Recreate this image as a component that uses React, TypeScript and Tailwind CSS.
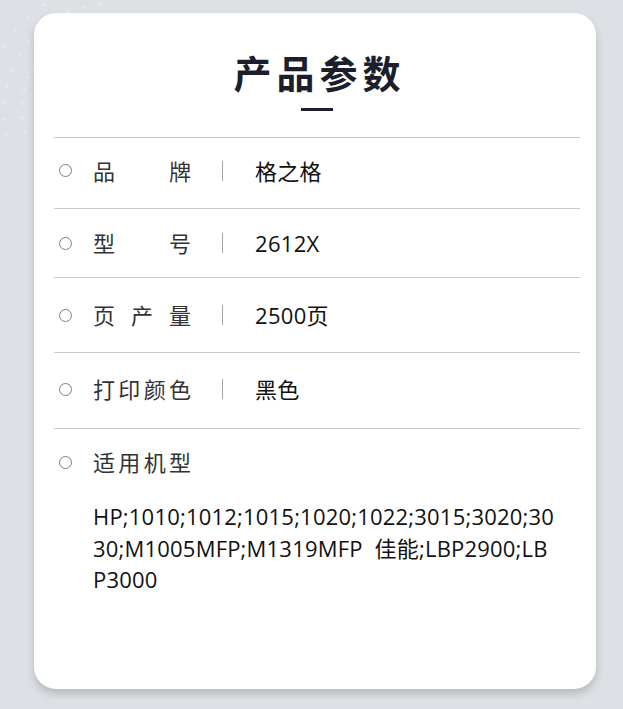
import React from 'react';

const rows = [
  { label: '品牌', value: '格之格', h: 'h-[71px] pb-[5px]' },
  { label: '型号', value: '2612X', h: 'h-[69px]' },
  { label: '页产量', value: '2500页', h: 'h-[75px]' },
  { label: '打印颜色', value: '黑色', h: 'h-[76px] pb-[3px]' },
];

function Dots() {
  // faint dotted arcs in the page corner
  const dots: { x: number; y: number }[] = [];
  [70, 88, 106, 124].forEach((r) => {
    for (let a = 95; a <= 200; a += 9) {
      const t = (a * Math.PI) / 180;
      dots.push({ x: 110 + r * Math.cos(t), y: 110 - r * Math.sin(t) });
    }
  });
  return (
    <svg className="absolute left-0 top-0" width="140" height="260" viewBox="0 0 140 260">
      {dots.map((d, i) => (
        <circle key={i} cx={d.x} cy={d.y} r="1.6" fill="#ffffff" opacity="0.3" />
      ))}
    </svg>
  );
}

function Bullet() {
  return <span className="block h-[13px] w-[13px] shrink-0 rounded-full border-[1.5px] border-[#7d7d7d]" />;
}

export default function App() {
  return (
    <div
      className="relative h-[709px] w-full overflow-hidden bg-[#dde1e5] pl-[34px] pt-[13px]"
      style={{ fontFamily: '"Open Sans", "Noto Sans CJK SC", sans-serif' }}
    >
      <Dots />
      <div className="relative flex h-[676px] w-[562px] flex-col rounded-[22px] bg-white pl-[20px] pr-[16px] pt-[37px] shadow-[0_5px_8px_rgba(0,0,0,0.18)]">
        <h1 className="pl-[5px] text-center text-[38px] font-semibold leading-[46px] tracking-[5px] text-[#1c1e2e]">
          产品参数
        </h1>
        <div className="mx-auto mt-[12px] h-[3px] w-[32px] bg-[#1c1e2e]" />

        <div className="mt-[26px] border-t border-[#c9c9c9]">
          {rows.map((r) => (
            <div key={r.label} className={`flex items-center border-b border-[#c9c9c9] pl-[5px] ${r.h}`}>
              <Bullet />
              <span className="ml-[21px] w-[98px] text-[22px] leading-[32px] text-[#333] [text-align-last:justify]">
                {r.label}
              </span>
              <span className="ml-[31px] h-[20px] w-px bg-[#a8a8a8]" />
              <span className="ml-[32px] text-[22px] leading-[32px] tracking-[0.3px] text-[#111]">{r.value}</span>
            </div>
          ))}

          <div className="flex h-[66px] items-center pl-[5px]">
            <Bullet />
            <span className="ml-[21px] w-[98px] text-[22px] leading-[32px] text-[#333] [text-align-last:justify]">
              适用机型
            </span>
          </div>
          <p className="ml-[39px] mt-[6px] w-[464px] text-[22px] leading-[31.5px] tracking-[0.2px] text-[#111] [word-break:break-all] [word-spacing:6px]">
            HP;1010;1012;1015;1020;1022;3015;3020;3030;M1005MFP;M1319MFP 佳能;LBP2900;LBP3000
          </p>
        </div>
      </div>
    </div>
  );
}
